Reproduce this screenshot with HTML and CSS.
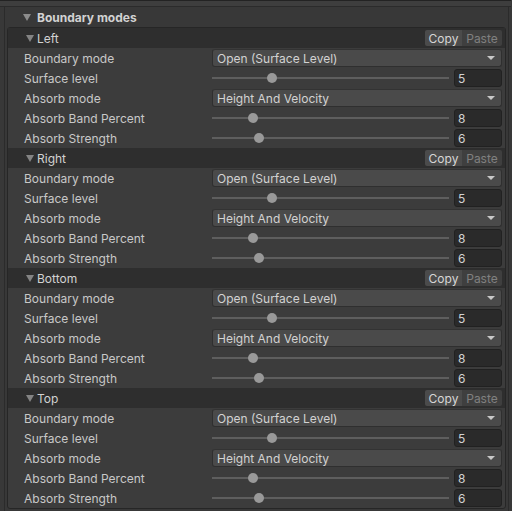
FILE: index.html
```html
<!DOCTYPE html>
<html>
<head>
<meta charset="utf-8">
<link rel="stylesheet" href="styles.css">
</head>
<body>
<div class="top"></div>
<div class="panel">
  <div class="panel-head"><span class="tri"></span><span class="title">Boundary modes</span></div>
  <div class="box">
    <div class="sec">
      <div class="sec-head"><span class="tri small"></span><span class="sec-title">Left</span><span class="btns"><span class="btn copy">Copy</span><span class="btn paste">Paste</span></span></div>
      <div class="row"><span class="label">Boundary mode</span><div class="field drop"><span>Open (Surface Level)</span><span class="arrow"></span></div></div>
      <div class="row"><span class="label">Surface level</span><div class="field slider"><div class="track"><span class="thumb" style="left:55px"></span></div><div class="num">5</div></div></div>
      <div class="row"><span class="label">Absorb mode</span><div class="field drop"><span>Height And Velocity</span><span class="arrow"></span></div></div>
      <div class="row"><span class="label">Absorb Band Percent</span><div class="field slider"><div class="track"><span class="thumb" style="left:36px"></span></div><div class="num">8</div></div></div>
      <div class="row"><span class="label">Absorb Strength</span><div class="field slider"><div class="track"><span class="thumb" style="left:42px"></span></div><div class="num">6</div></div></div>
    </div>
    <div class="sec">
      <div class="sec-head"><span class="tri small"></span><span class="sec-title">Right</span><span class="btns"><span class="btn copy">Copy</span><span class="btn paste">Paste</span></span></div>
      <div class="row"><span class="label">Boundary mode</span><div class="field drop"><span>Open (Surface Level)</span><span class="arrow"></span></div></div>
      <div class="row"><span class="label">Surface level</span><div class="field slider"><div class="track"><span class="thumb" style="left:55px"></span></div><div class="num">5</div></div></div>
      <div class="row"><span class="label">Absorb mode</span><div class="field drop"><span>Height And Velocity</span><span class="arrow"></span></div></div>
      <div class="row"><span class="label">Absorb Band Percent</span><div class="field slider"><div class="track"><span class="thumb" style="left:36px"></span></div><div class="num">8</div></div></div>
      <div class="row"><span class="label">Absorb Strength</span><div class="field slider"><div class="track"><span class="thumb" style="left:42px"></span></div><div class="num">6</div></div></div>
    </div>
    <div class="sec">
      <div class="sec-head"><span class="tri small"></span><span class="sec-title">Bottom</span><span class="btns"><span class="btn copy">Copy</span><span class="btn paste">Paste</span></span></div>
      <div class="row"><span class="label">Boundary mode</span><div class="field drop"><span>Open (Surface Level)</span><span class="arrow"></span></div></div>
      <div class="row"><span class="label">Surface level</span><div class="field slider"><div class="track"><span class="thumb" style="left:55px"></span></div><div class="num">5</div></div></div>
      <div class="row"><span class="label">Absorb mode</span><div class="field drop"><span>Height And Velocity</span><span class="arrow"></span></div></div>
      <div class="row"><span class="label">Absorb Band Percent</span><div class="field slider"><div class="track"><span class="thumb" style="left:36px"></span></div><div class="num">8</div></div></div>
      <div class="row"><span class="label">Absorb Strength</span><div class="field slider"><div class="track"><span class="thumb" style="left:42px"></span></div><div class="num">6</div></div></div>
    </div>
    <div class="sec">
      <div class="sec-head"><span class="tri small"></span><span class="sec-title">Top</span><span class="btns"><span class="btn copy">Copy</span><span class="btn paste">Paste</span></span></div>
      <div class="row"><span class="label">Boundary mode</span><div class="field drop"><span>Open (Surface Level)</span><span class="arrow"></span></div></div>
      <div class="row"><span class="label">Surface level</span><div class="field slider"><div class="track"><span class="thumb" style="left:55px"></span></div><div class="num">5</div></div></div>
      <div class="row"><span class="label">Absorb mode</span><div class="field drop"><span>Height And Velocity</span><span class="arrow"></span></div></div>
      <div class="row"><span class="label">Absorb Band Percent</span><div class="field slider"><div class="track"><span class="thumb" style="left:36px"></span></div><div class="num">8</div></div></div>
      <div class="row"><span class="label">Absorb Strength</span><div class="field slider"><div class="track"><span class="thumb" style="left:42px"></span></div><div class="num">6</div></div></div>
    </div>
  </div>
</div>
</body>
</html>
```

FILE: styles.css
```css
* { box-sizing: border-box; }
html, body { margin: 0; padding: 0; }
body {
  width: 512px;
  height: 511px;
  overflow: hidden;
  background: #383838;
  font-family: Inter, "Noto Sans", "Liberation Sans", sans-serif;
  font-size: 12px;
  color: #c8c8c8;
}
.top {
  height: 7px;
  background: #3e3e3e;
  border-top: 1px solid #232323;
  border-bottom: 1px solid #2b2b2b;
  margin-right: 1px;
}
.panel {
  margin-left: 4px;
  width: 505px;
  height: 504px;
  border-left: 1px solid #2b2b2b;
  border-right: 1px solid #2b2b2b;
  background: #383838;
}
.panel-head {
  height: 20px;
  display: flex;
  align-items: center;
  padding-left: 18px;
}
.tri {
  width: 0;
  height: 0;
  border-left: 4px solid transparent;
  border-right: 4px solid transparent;
  border-top: 7px solid #8c8c8c;
  margin-right: 6px;
}
.tri.small {
  border-left-width: 4px;
  border-right-width: 4px;
  border-top-width: 7px;
  border-top-color: #848484;
  margin-right: 3px;
}
.title {
  font-weight: 700;
  color: #d2d2d2;
}
.box {
  margin-left: 2px;
  width: 499px;
  border: 1px solid #262626;
  border-radius: 3px;
  background: #3c3c3c;
}
.sec-head {
  height: 20px;
  display: flex;
  align-items: center;
  padding-left: 18px;
  padding-right: 3px;
  background: #2e2e2e;
}
.sec-title {
  color: #d2d2d2;
}
.btns {
  margin-left: auto;
  display: flex;
  height: 16px;
}
.btn {
  display: flex;
  align-items: center;
  justify-content: center;
  height: 16px;
}
.copy {
  width: 37px;
  background: #4b4b4b;
  color: #d6d6d6;
  border-radius: 2px 0 0 2px;
}
.paste {
  width: 40px;
  background: #3f3f3f;
  color: #808080;
  border-radius: 0 2px 2px 0;
}
.row {
  height: 20px;
  display: flex;
  align-items: center;
  padding-left: 16px;
  padding-right: 3px;
}
.label {
  width: 188px;
  flex: none;
  white-space: nowrap;
}
.field {
  flex: 1;
  height: 18px;
}
.drop {
  display: flex;
  align-items: center;
  padding-left: 4px;
  padding-right: 6px;
  background: #4a4a4a;
  border: 1px solid #2f2f2f;
  border-top-color: #333333;
  border-radius: 3px;
  color: #d2d2d2;
}
.arrow {
  margin-left: auto;
  width: 0;
  height: 0;
  border-left: 4px solid transparent;
  border-right: 4px solid transparent;
  border-top: 4px solid #c8c8c8;
}
.slider {
  display: flex;
  align-items: center;
  gap: 5px;
}
.track {
  position: relative;
  width: 237px;
  height: 2px;
  background: #5e5e5e;
}
.thumb {
  position: absolute;
  top: -4px;
  width: 10px;
  height: 10px;
  border-radius: 50%;
  background: #999999;
}
.num {
  width: 48px;
  height: 18px;
  display: flex;
  align-items: center;
  padding-left: 3px;
  background: #2a2a2a;
  border: 1px solid #212121;
  border-radius: 3px;
  color: #d2d2d2;
}
```
